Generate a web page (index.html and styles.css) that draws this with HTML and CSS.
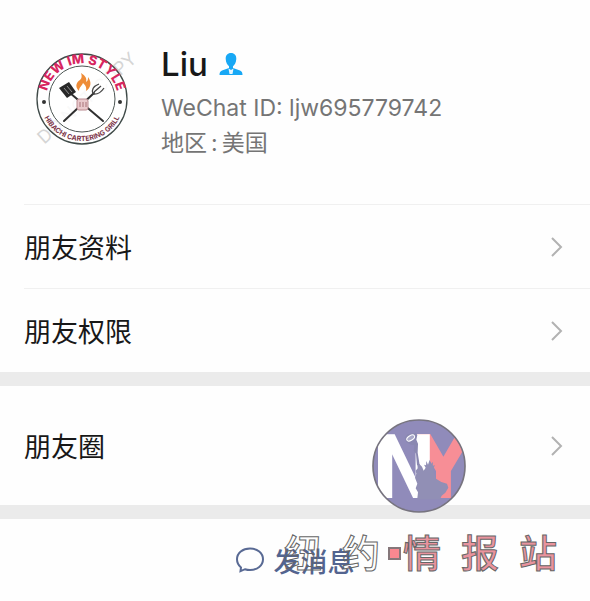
FILE: index.html
```
<!DOCTYPE html>
<html lang="zh-CN">
<head>
    <meta charset="UTF-8">
    <meta name="viewport" content="width=device-width, initial-scale=1.0">
    <title>Liu</title>
    <link rel="stylesheet" href="styles.css">
</head>
<body>
    <main class="profile">
        <!-- Contact header -->
        <header class="contact">
            <svg class="avatar" viewBox="0 0 116 116" role="img" aria-label="New IM Style">
                <defs>
                    <path id="arc-title" d="M22.500 61A35.700 35.700 0 1 1 93.500 61"/>
                    <path id="arc-bottom" d="M16 57A42 42 0 0 0 100 57"/>
                </defs>
                <text class="avatar-mark" x="-58" y="8" transform="translate(58 58) rotate(-42)">DO NOT COPY</text>
                <circle cx="58" cy="57" r="45" fill="#fff" fill-opacity=".7" stroke="#3f4a48" stroke-width="1.300"/>
                <circle cx="58" cy="57" r="33" fill="#fff" fill-opacity=".5" stroke="#4d5654" stroke-width="1"/>
                <text class="avatar-title"><textPath href="#arc-title" startOffset="50%" text-anchor="middle">NEW IM STYLE</textPath></text>
                <text class="avatar-sub"><textPath href="#arc-bottom" startOffset="50%" text-anchor="middle">HIBACHI CARTERING GRILL</textPath></text>
                <circle cx="20" cy="60" r="2" fill="#333"/>
                <circle cx="96" cy="60" r="2" fill="#333"/>
                <path d="M55 49C50 44 53 40 56 38C58 36 58 34 57 31C62 34 63 37 62 40C64 39 64 37 64 35C68 40 67 46 62 49C63 45 61 43 59 41C58 44 55 45 55 49Z" fill="#ee8c38"/>
                <path d="M46 51L79 79M70 51L40 79" fill="none" stroke="#303030" stroke-width="2" stroke-linecap="round"/>
                <path d="M35 46L45 40L52 50L43 56Z" fill="#282828"/>
                <path d="M40 46L45 52M43 44L48 50" stroke="#aaa" stroke-width=".800"/>
                <path d="M69 52C67 47 70 44 75 42M69 52C75 53 78 49 80 46M70 50L77 44" fill="none" stroke="#444" stroke-width="1.300"/>
                <rect x="53" y="57" width="11" height="11" rx="2" fill="#e9c9cc" stroke="#bc8c91"/>
                <path d="M56 60V65M59 60V65M62 60V65" stroke="#a87279"/>
            </svg>
            <div class="contact-info">
                <h1 class="contact-name">
                    Liu
                    <svg class="person" viewBox="0 0 24 24" aria-hidden="true">
                        <path d="M12 1C8.500 1 6.500 3.500 6.700 7C6.900 10.500 8.300 13 10 14.300V16L3 18.500C1.300 19.200 .500 20.500 .500 23H23.500C23.500 20.500 22.700 19.200 21 18.500L14 16V14.300C15.700 13 17.100 10.500 17.300 7C17.500 3.500 15.500 1 12 1Z" fill="#18a8f5"/>
                        <path d="M9.500 16.500L12 18L14.500 16.500L13.500 22H10.500Z" fill="#e8f6ff"/>
                    </svg>
                </h1>
                <p class="contact-line">WeChat ID: ljw695779742</p>
                <p class="contact-line">地区<span class="colon">:</span>美国</p>
            </div>
        </header>

        <!-- Links -->
        <nav class="menu">
            <a class="menu-row" href="#info">朋友资料
                <svg class="chevron" viewBox="0 0 12 20" aria-hidden="true"><path d="M1 1L10 10L1 19"/></svg>
            </a>
            <a class="menu-row" href="#privacy">朋友权限
                <svg class="chevron" viewBox="0 0 12 20" aria-hidden="true"><path d="M1 1L10 10L1 19"/></svg>
            </a>
            <a class="menu-row moments" href="#moments">朋友圈
                <svg class="chevron" viewBox="0 0 12 20" aria-hidden="true"><path d="M1 1L10 10L1 19"/></svg>
            </a>
        </nav>

        <button class="message" type="button">
            <svg class="bubble" viewBox="0 0 28 26" aria-hidden="true">
                <path d="M5 20.500C2.500 18.500 1 15.500 1 12.300C1 6 6.700 1.500 14 1.500S27 6 27 12.300S21.300 23 14 23C12.200 23 10.500 22.700 9 22.200L4.500 24.200Z"/>
            </svg>
            发消息
        </button>

        <!-- Watermark -->
        <svg class="seal" viewBox="38 42 282 282" role="img" aria-label="NY">
            <defs>
                <clipPath id="seal-clip"><circle cx="179" cy="183" r="138"/></clipPath>
            </defs>
            <circle cx="179" cy="183" r="138" fill="#908bba"/>
            <g clip-path="url(#seal-clip)">
                <text class="seal-text" x="166" y="278" fill="#f78e96">Y</text>
                <text class="seal-text" x="34" y="278" fill="#fff">N</text>
                <path d="M174 280L176 262L169 250L174 236L167 218L171 206L169 197L175 190L174 178L180 177L188 185L193 197L199 188L194 179L200 181L201 168L206 179L211 164L214 179L221 170L220 182L227 181L222 190L224 205L230 221L246 231L263 236L267 248L258 263L247 272L242 283L176 283Z" fill="#918fb5"/>
                <path d="M136 98L144 88L170 83L174 90L171 104L176 116L175 143L181 180L173 181L170 146L163 137L165 121L155 119L141 112Z" fill="#8a88b1"/>
                <ellipse cx="154" cy="99" rx="13" ry="7" transform="rotate(-32 154 99)" fill="#aaa9c9" stroke="#fff" stroke-width="3"/>
            </g>
            <circle cx="179" cy="183" r="138" fill="none" stroke="#77747f" stroke-width="5"/>
        </svg>
        <div class="watermark">
            <span class="glyph">纽</span>
            <span class="glyph">约</span>
            <span class="dot"></span>
            <span class="glyph filled">情</span>
            <span class="glyph filled">报</span>
            <span class="glyph filled">站</span>
        </div>
    </main>
</body>
</html>
```
FILE: styles.css
```
* {
    margin: 0;
    padding: 0;
    box-sizing: border-box;
}

body {
    background: #fefefe;
    color: #181818;
    font-family: Inter, "Noto Sans CJK SC", sans-serif;
}

.profile {
    position: relative;
    overflow: hidden;
}

/* Contact header */
.contact {
    display: flex;
    gap: 21px;
    padding: 42px 24px 46px;
}

.avatar {
    width: 116px;
    height: 116px;
    flex-shrink: 0;
}

.avatar-mark {
    font-size: 18px;
    fill: #d5d5d5;
}

.avatar-title {
    font-size: 13px;
    font-weight: 800;
    fill: #d72660;
}

.avatar-sub {
    font-size: 7px;
    font-weight: 700;
    fill: #7d3549;
}

.contact-name {
    display: flex;
    align-items: center;
    gap: 11px;
    margin-bottom: 8px;
    font-size: 33px;
    font-weight: 500;
    line-height: 44px;
}

.person {
    width: 24px;
    height: 24px;
}

.contact-line {
    color: #757575;
    font-size: 23px;
    line-height: 28px;
}

.contact-line + .contact-line {
    margin-top: 7px;
}

.colon {
    padding: 0 4px;
}

/* Links */
.menu-row {
    display: flex;
    align-items: center;
    justify-content: space-between;
    height: 84px;
    margin-left: 24px;
    padding-right: 27px;
    border-top: 1px solid #f0f0f0;
    color: #181818;
    font-family: "Noto Sans CJK SC", sans-serif;
    font-size: 27px;
    line-height: 36px;
    text-decoration: none;
}

.moments {
    height: 147px;
    margin-left: 0;
    padding-left: 24px;
    border-top: 14px solid #ebebeb;
    border-bottom: 14px solid #ebebeb;
}

.chevron {
    width: 12px;
    height: 20px;
    fill: none;
    stroke: #b2b2b2;
    stroke-width: 2;
}

/* Message button */
.message {
    display: flex;
    align-items: center;
    justify-content: center;
    gap: 10px;
    width: 100%;
    height: 82px;
    border: none;
    background: #fefefe;
    color: #53648f;
    font-family: "Noto Sans CJK SC", sans-serif;
    font-size: 27px;
    font-weight: 500;
    cursor: pointer;
}

.bubble {
    width: 28px;
    height: 26px;
    fill: none;
    stroke: #596a94;
    stroke-width: 2;
}

/* Watermark */
.seal {
    position: absolute;
    right: 124px;
    bottom: 88px;
    width: 94px;
    height: 94px;
}

.seal-text {
    font-family: "Liberation Sans Narrow", "DejaVu Sans Condensed", sans-serif;
    font-size: 264px;
    font-weight: 700;
}

.watermark {
    position: absolute;
    right: 33px;
    bottom: 28px;
    display: flex;
    align-items: center;
    gap: 20px;
    line-height: 40px;
    pointer-events: none;
}

.glyph {
    color: transparent;
    font-size: 38px;
    font-weight: 500;
    -webkit-text-stroke: 1px #666;
}

.filled {
    color: #e9939d;
}

.dot {
    width: 13px;
    height: 13px;
    margin: 0 -18px 0 -12px;
    border: 2px solid #85777a;
    background: #fa8890;
}
```
